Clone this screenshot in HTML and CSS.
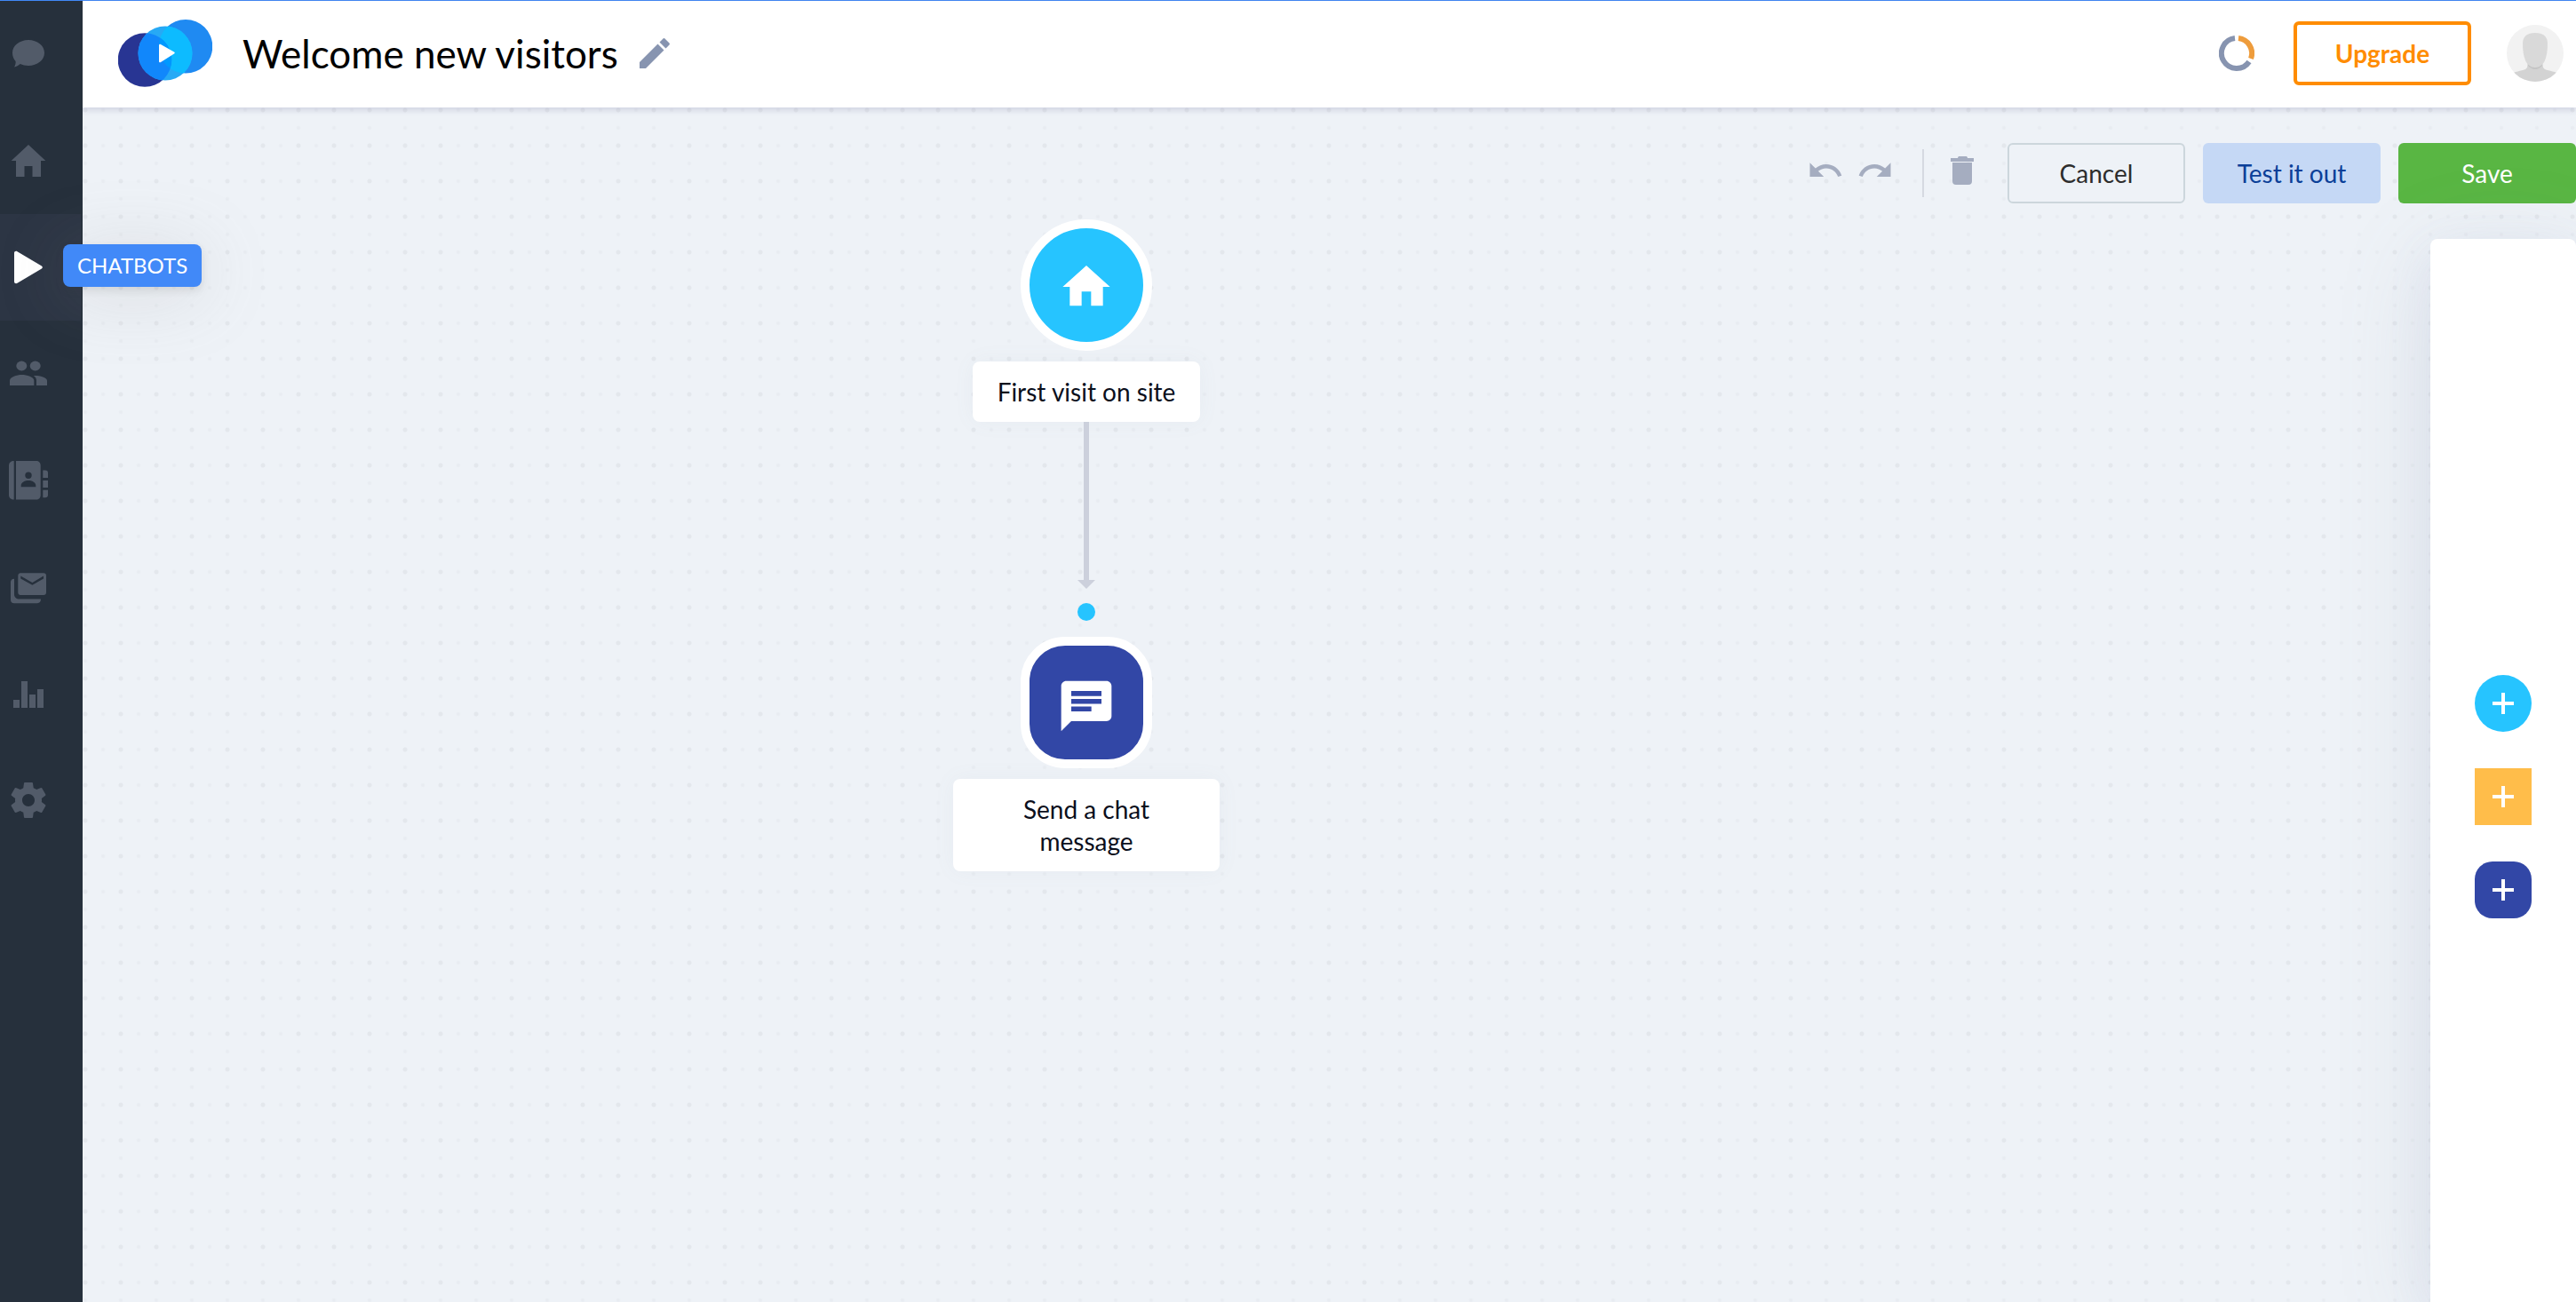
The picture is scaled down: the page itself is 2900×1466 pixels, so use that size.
FILE: index.html
```html
<!DOCTYPE html>
<html lang="en">
<head>
<meta charset="utf-8">
<title>Welcome new visitors</title>
<link rel="stylesheet" href="styles.css">
</head>
<body>
<div class="app">
  <nav class="sidebar" aria-label="Main">
    <a class="nav-item" href="#" aria-label="Conversations">
      <svg class="nav-icon" viewBox="0 0 48 48"><path d="M24 8c10 0 18 6.400 18 14.500S34 37 24 37c-3.500 0-6.500-.6-9.300-1.900C12.500 37 10.500 38 8 38.500c1.200-2 1.800-4 1.600-6.500C7.300 29.400 6 26.200 6 22.500 6 14.400 14 8 24 8z"/></svg>
    </a>
    <a class="nav-item" href="#" aria-label="Home">
      <svg class="nav-icon" viewBox="0 0 48 48"><path d="M24 6l19.300 18H38v18h-9.500V30h-9v12H10V24H4.700z"/></svg>
    </a>
    <a class="nav-item nav-item-active" href="#" aria-label="Chatbots">
      <svg class="nav-icon" viewBox="0 0 48 48"><path d="M8 8c0-2 2-2.800 3.500-1.800l27 16c1.800 1 1.800 2.600 0 3.600l-27 16C10 42.800 8 42 8 40z"/></svg>
      <span class="tooltip">CHATBOTS</span>
    </a>
    <a class="nav-item" href="#" aria-label="Visitors">
      <svg class="nav-icon" viewBox="0 0 48 48"><ellipse cx="16.300" cy="15" rx="6" ry="5.400"/><ellipse cx="31.700" cy="15" rx="6" ry="5.400"/><path d="M3 37v-5.500C3 27.500 11 25 16.600 25s13.700 2.500 13.700 6.500V37z"/><path d="M33 37v-5.500c0-2.300-1.200-4-3.300-5.400C35 25.600 45 27.600 45 31.500V37z"/></svg>
    </a>
    <a class="nav-item" href="#" aria-label="Contacts">
      <svg class="nav-icon" viewBox="0 0 48 48"><path d="M7.700 2v43.500C4.500 45.500 2 43.500 2 40.500V7c0-3 2.500-5 5.700-5z"/><path fill-rule="evenodd" d="M10 2h22.700c3 0 5 2 5 5v33.500c0 3-2 5-5 5H10zM24 14.600a3.700 3.700 0 100 7.400 3.700 3.700 0 000-7.400zM15.700 31.300h16.600v-1.800c0-3.500-4.500-5.500-8.300-5.500s-8.300 2-8.300 5.500z"/><path d="M40.300 12.600H43a3 3 0 013 3V21h-5.700zM40.300 24H46v8h-5.700zM40.300 34.800H46v5.400a3 3 0 01-3 3h-2.700z"/></svg>
    </a>
    <a class="nav-item" href="#" aria-label="Emails">
      <svg class="nav-icon" viewBox="0 0 48 48"><path fill-rule="evenodd" d="M15 8.200h26a3 3 0 013 3V30a3 3 0 01-3 3H15a3 3 0 01-2.700-3V11.200a3 3 0 012.700-3zM15.300 11.500v2.900l13.100 7.400L41 14.400v-2.900l-12.600 7.400z"/><path d="M8 14.700V32c0 3.500 2.300 5.600 6 5.600h24c0 3-1.500 4.600-4 4.600H8c-2.500 0-4-1.500-4-4V18.500c0-2.500 1.500-3.800 4-3.800z"/></svg>
    </a>
    <a class="nav-item" href="#" aria-label="Analytics">
      <svg class="nav-icon" viewBox="0 0 48 48"><path d="M7 31h7v9H7zM16 10h7v30h-7zM25 25h7v15h-7zM34 19h7v21h-7z"/></svg>
    </a>
    <a class="nav-item" href="#" aria-label="Settings">
      <svg class="nav-icon" viewBox="0 0 24 24"><path d="M19.430 12.980c.04-.32.07-.64.07-.98s-.03-.66-.07-.98l2.110-1.650c.19-.15.24-.42.12-.64l-2-3.460c-.12-.22-.39-.3-.61-.22l-2.490 1c-.52-.4-1.080-.73-1.690-.98l-.38-2.650C14.460 2.180 14.250 2 14 2h-4c-.25 0-.46.18-.49.42l-.38 2.650c-.61.25-1.170.59-1.690.98l-2.490-1c-.23-.09-.49 0-.61.22l-2 3.460c-.13.22-.07.49.12.64l2.110 1.650c-.04.32-.07.65-.07.98s.03.66.07.98l-2.110 1.650c-.19.15-.24.42-.12.64l2 3.460c.12.22.39.3.61.22l2.490-1c.52.4 1.080.73 1.690.98l.38 2.650c.03.24.24.42.49.42h4c.25 0 .46-.18.49-.42l.38-2.650c.61-.25 1.170-.59 1.690-.98l2.490 1c.23.09.49 0 .61-.22l2-3.460c.12-.22.07-.49-.12-.64l-2.110-1.650zM12 15.500c-1.930 0-3.500-1.570-3.500-3.500s1.570-3.500 3.500-3.500 3.500 1.570 3.500 3.500-1.570 3.500-3.500 3.500z"/></svg>
    </a>
  </nav>

  <div class="main">
    <header class="header">
      <svg class="logo" viewBox="0 0 106 76" aria-hidden="true">
        <defs>
          <clipPath id="left"><circle cx="30" cy="45" r="30"/></clipPath>
          <clipPath id="mid"><circle cx="53" cy="38" r="30.500"/></clipPath>
        </defs>
        <circle cx="30" cy="45.500" r="30.300" fill="#283593"/>
        <circle cx="76" cy="30.300" r="30.300" fill="#1f8af2"/>
        <circle cx="53" cy="38" r="30.500" fill="#27a9f5"/>
        <g clip-path="url(#mid)">
          <circle cx="76" cy="30.300" r="30.300" fill="#0dbbff"/>
          <circle cx="30" cy="45.500" r="30.300" fill="#1187fb"/>
          <g clip-path="url(#left)"><circle cx="76" cy="30.300" r="30.300" fill="#0099ff"/></g>
        </g>
        <path d="M46 29c0-1.200 1-1.700 2-1.100l15 8.600c1 .6 1 1.400 0 2l-15 9.500c-1 .6-2 .2-2-1z" fill="#fff"/>
      </svg>
      <h1 class="title">Welcome new visitors</h1>
      <button class="icon-button" type="button" aria-label="Rename">
        <svg class="pencil" viewBox="0 0 34 34"><path d="M0 27L20.500 6.500l7 7L7 34H0zM22.500 4.600L26 1c1-1.200 2-1.200 3 0l4 4c1.200 1.200 1.200 2 0 3l-3.500 3.600z"/></svg>
      </button>
      <div class="account">
        <button class="icon-button account-usage" type="button" aria-label="Usage">
          <svg class="usage" viewBox="0 0 40 40"><path d="M18 3.100A17 17 0 1 0 34 29.500" stroke="#8794b0"/><path d="M22 3.100A17 17 0 0 1 36 26" stroke="#ee9c3c"/></svg>
        </button>
        <button class="button button-upgrade" type="button">Upgrade</button>
        <button class="icon-button" type="button" aria-label="Profile">
          <svg class="avatar" viewBox="0 0 64 64">
            <clipPath id="face"><circle cx="32" cy="32" r="32"/></clipPath>
            <g clip-path="url(#face)">
              <path fill="#f2f2f2" d="M0 0h64v64H0z"/>
              <path fill="#d3d3d3" d="M4 56c5-3.500 12-4 17-6 2-1 2.500-3 2.500-7h17c0 4 .5 6 2.500 7 5 2 12 2.500 17 6v10H4z"/>
              <path fill="#c4c4c4" d="M24 43h16v3c-3 2.500-5 4-8 4s-5-1.500-8-4z"/>
              <path fill="#d9d9d9" d="M18 21c0-8 5-12 14-12s14 4 14 12c0 8-1 14-3 19-2 4.500-6 8-11 8s-9-3.500-11-8c-2-5-3-11-3-19z"/>
            </g>
          </svg>
        </button>
      </div>
    </header>

    <main class="canvas">
      <div class="flow">
        <div class="shape shape-trigger">
          <svg class="shape-icon" viewBox="0 0 24 24"><path d="M10 20v-6h4v6h5v-8h3L12 3 2 12h3v8z"/></svg>
        </div>
        <div class="label">First visit on site</div>
        <div class="connector"></div>
        <div class="port"></div>
        <div class="shape shape-action">
          <svg class="shape-icon" viewBox="0 0 24 24"><path d="M20 2H4c-1.100 0-1.990.9-1.990 2L2 22l4-4h14c1.100 0 2-.9 2-2V4c0-1.100-.9-2-2-2zM6 9.200h12v1.900H6zM14 14.100H6v-1.900h8zM18 8H6V6h12z"/></svg>
        </div>
        <div class="label">Send a chat message</div>
      </div>

      <div class="toolbar">
        <div class="tools">
          <button class="icon-button" type="button" aria-label="Undo">
            <svg class="tool-icon" viewBox="0 0 24 24"><path d="M12.500 8c-2.650 0-5.050.99-6.900 2.600L2 7v9h9l-3.620-3.620c1.390-1.160 3.160-1.880 5.120-1.880 3.540 0 6.550 2.310 7.600 5.500l2.370-.78C21.080 11.030 17.150 8 12.500 8z"/></svg>
          </button>
          <button class="icon-button" type="button" aria-label="Redo">
            <svg class="tool-icon" viewBox="0 0 24 24"><path d="M18.400 10.600C16.550 8.990 14.150 8 11.500 8c-4.650 0-8.580 3.030-9.960 7.220L3.900 16c1.050-3.190 4.050-5.500 7.600-5.500 1.950 0 3.730.72 5.120 1.880L13 16h9V7l-3.600 3.600z"/></svg>
          </button>
        </div>
        <div class="divider"></div>
        <div class="tools">
          <button class="icon-button" type="button" aria-label="Delete">
            <svg class="tool-icon" viewBox="0 0 42 42"><path d="M16 7c0-1.500 1-2 2-2h7c1 0 2 .5 2 2h7v4H8V7zM10 12h22v21a4 4 0 01-4 4H14a4 4 0 01-4-4z"/></svg>
          </button>
        </div>
        <div class="actions">
          <button class="button button-cancel" type="button">Cancel</button>
          <button class="button button-test" type="button">Test it out</button>
          <button class="button button-save" type="button">Save</button>
        </div>
      </div>

      <aside class="palette" aria-label="Add a node">
        <button class="add add-trigger" type="button" aria-label="Add trigger"><svg class="plus" viewBox="0 0 24 24"><path d="M10 0h4v10h10v4H14v10h-4V14H0v-4h10z"/></svg></button>
        <button class="add add-condition" type="button" aria-label="Add condition"><svg class="plus" viewBox="0 0 24 24"><path d="M10 0h4v10h10v4H14v10h-4V14H0v-4h10z"/></svg></button>
        <button class="add add-action" type="button" aria-label="Add action"><svg class="plus" viewBox="0 0 24 24"><path d="M10 0h4v10h10v4H14v10h-4V14H0v-4h10z"/></svg></button>
      </aside>
    </main>
  </div>
</div>
</body>
</html>
```

FILE: styles.css
```css
*,
*::before,
*::after {
  box-sizing: border-box;
}

body {
  margin: 0;
  font-family: Lato, "Liberation Sans", sans-serif;
  font-size: 28px;
  line-height: 36px;
  color: #0b0f1c;
}

svg {
  display: block;
  fill: currentColor;
}

.app {
  display: flex;
  min-height: 100vh;
  border-top: 1px solid #4189f8;
}

/* Sidebar */
.sidebar {
  position: relative;
  z-index: 3;
  flex: none;
  display: flex;
  flex-direction: column;
  width: 93px;
  padding-right: 2px;
  background: #26303c;
}

.nav-item {
  position: relative;
  display: flex;
  align-items: center;
  height: 120px;
  padding-left: 8px;
  color: #525b69;
}

.nav-item-active {
  background: #2c3544;
  color: #fff;
}

.nav-icon {
  width: 48px;
  height: 48px;
}

.tooltip {
  position: absolute;
  left: 71px;
  top: 34px;
  padding: 6px 16px;
  border-radius: 8px;
  background: #4189f8;
  color: #fff;
  font-size: 24px;
  box-shadow: 0 4px 10px rgba(60, 60, 60, 0.12), 0 8px 80px rgba(140, 140, 140, 0.22);
}

/* Header */
.main {
  flex: 1;
  display: flex;
  flex-direction: column;
  min-width: 0;
}

.header {
  position: relative;
  z-index: 2;
  display: flex;
  align-items: center;
  height: 120px;
  padding: 0 14px 2px 40px;
  background: #fff;
  box-shadow: 0 2px 8px rgba(60, 60, 120, 0.2);
}

.logo {
  width: 106px;
  height: 76px;
}

.title {
  margin: 0 24px 0 34px;
  font-size: 44px;
  line-height: 56px;
  font-weight: 400;
  color: #000;
  white-space: nowrap;
}

.icon-button {
  display: block;
  padding: 0;
  border: 0;
  background: none;
  color: inherit;
}

.pencil {
  width: 34px;
  height: 34px;
  color: #8794b0;
}

.account {
  display: flex;
  align-items: center;
  gap: 40px;
  margin-left: auto;
}

.account-usage {
  margin-right: 4px;
}

.usage {
  width: 40px;
  height: 40px;
  fill: none;
  stroke-width: 6;
}

.avatar {
  width: 64px;
  height: 64px;
}

.button {
  width: 200px;
  height: 68px;
  padding: 0;
  border: 0;
  border-radius: 6px;
  font: inherit;
}

.button-upgrade {
  height: 72px;
  border: 4px solid #ff8c00;
  background: #fff;
  color: #ff8c00;
  font-weight: 700;
}

/* Canvas */
.canvas {
  position: relative;
  flex: 1;
  display: flex;
  flex-direction: column;
  align-items: flex-end;
  padding-top: 40px;
  background-color: #eef2f7;
  background-image:
    radial-gradient(circle, #e3e7ec 2px, transparent 3px),
    radial-gradient(circle, #e8ecf1 1px, transparent 3px),
    radial-gradient(circle, #e8ecf1 1px, transparent 3px);
  background-size: 40px 40px;
  background-position: -17px -17px, 3px -17px, -17px 3px;
}

.toolbar {
  display: flex;
  align-items: center;
  color: #a5adc0;
}

.tools {
  display: flex;
  gap: 14px;
  padding-bottom: 6px;
}

.tool-icon {
  width: 42px;
  height: 42px;
}

.divider {
  width: 2px;
  height: 54px;
  margin: 0 22px 0 32px;
  background: #d5d9e1;
}

.actions {
  display: flex;
  gap: 20px;
  margin-left: 30px;
}

.button-cancel {
  border: 2px solid #ccd6dc;
  background: #eef2f7;
  color: #2d2d2d;
}

.button-test {
  background: #c5d8f5;
  color: #0b3f98;
}

.button-save {
  background: #59b643;
  color: #fff;
}

/* Node palette */
.palette {
  flex: 1;
  display: flex;
  flex-direction: column;
  align-items: center;
  justify-content: center;
  gap: 41px;
  width: 164px;
  margin-top: 40px;
  padding-top: 58px;
  border-radius: 8px 8px 0 0;
  background: #fff;
  box-shadow: 0 20px 110px rgba(130, 140, 150, 0.16), 0 16px 50px rgba(150, 160, 240, 0.1);
}

.add {
  display: flex;
  align-items: center;
  justify-content: center;
  width: 64px;
  height: 64px;
  padding: 0;
  border: 0;
  color: #fff;
}

.plus {
  width: 24px;
  height: 24px;
}

.add-trigger {
  border-radius: 50%;
  background: #26c4ff;
}

.add-condition {
  background: #ffbd4a;
}

.add-action {
  border-radius: 20px;
  background: #3247a6;
}

/* Flow diagram, placed freely on the canvas */
.flow {
  position: absolute;
  left: 980px;
  top: 126px;
  width: 300px;
  display: flex;
  flex-direction: column;
  align-items: center;
}

.shape {
  display: flex;
  align-items: center;
  justify-content: center;
  width: 148px;
  height: 148px;
  margin-bottom: 12px;
  padding-top: 4px;
  border: 10px solid #fff;
  color: #fff;
}

.shape-icon {
  width: 64px;
  height: 64px;
}

.shape-trigger {
  border-radius: 50%;
  background: #26c4ff;
}

.shape-action {
  padding-top: 8px;
  border-radius: 50px;
  background: #3247a6;
}

.shape-action .shape-icon {
  width: 68px;
  height: 68px;
}

.label {
  padding: 16px 28px;
  border-radius: 8px;
  background: #fff;
  text-align: center;
  box-shadow: 0 0 24px rgba(120, 130, 150, 0.06);
}

.connector {
  position: relative;
  width: 6px;
  height: 178px;
  background: #ccd0dc;
}

.connector::after {
  content: "";
  position: absolute;
  top: 100%;
  left: -7px;
  border: 10px solid transparent;
  border-top-color: #ccd0dc;
  border-bottom: 0;
}

.port {
  width: 20px;
  height: 20px;
  margin: 26px 0 18px;
  border-radius: 50%;
  background: #26c4ff;
}
```
